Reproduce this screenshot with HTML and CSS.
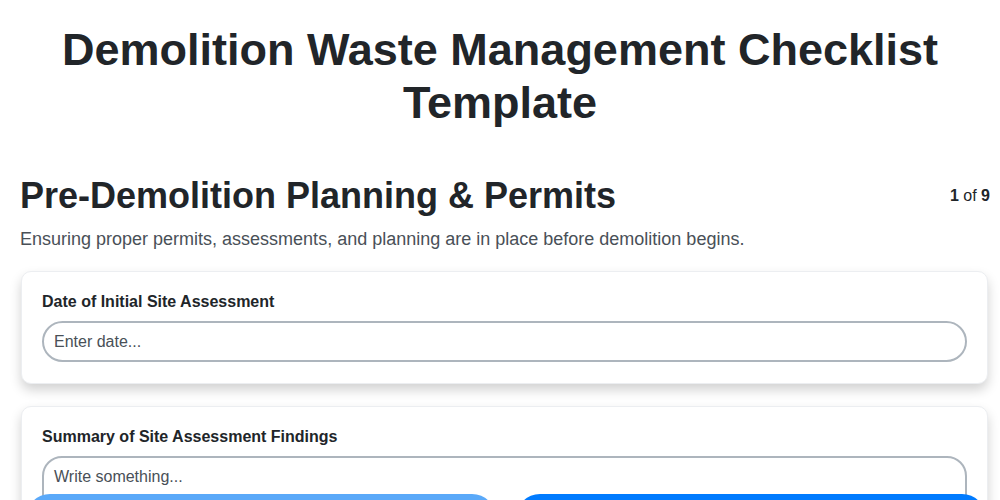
FILE: index.html
```html
<!DOCTYPE html>
<html lang="en">
<head>
<meta charset="utf-8">
<title>Demolition Waste Management Checklist Template</title>
<link rel="stylesheet" href="styles.css">
</head>
<body>
<main class="page">
  <h1 class="title">Demolition Waste Management Checklist Template</h1>
  <section class="section">
    <div class="section-head">
      <h2 class="section-title">Pre-Demolition Planning &amp; Permits</h2>
      <div class="progress"><b>1</b> of <b>9</b></div>
    </div>
    <p class="section-desc">Ensuring proper permits, assessments, and planning are in place before demolition begins.</p>
    <div class="card">
      <label class="field-label" for="d1">Date of Initial Site Assessment</label>
      <input class="field-input" id="d1" type="text" placeholder="Enter date...">
    </div>
    <div class="card">
      <label class="field-label" for="t1">Summary of Site Assessment Findings</label>
      <textarea class="field-textarea" id="t1" placeholder="Write something..."></textarea>
    </div>
  </section>
</main>
<nav class="nav">
  <button class="btn btn-prev" type="button">Previous</button>
  <button class="btn btn-next" type="button">Next</button>
</nav>
</body>
</html>
```
FILE: styles.css
```css
* { box-sizing: border-box; }
html, body { margin: 0; padding: 0; background: #fff; }
body {
  font-family: "Liberation Sans", Arial, sans-serif;
  color: #212529;
  font-size: 16px;
}
.page { padding: 0 10px 0 20px; }
.title {
  margin: 23px 30px 0 20px;
  text-align: center;
  font-size: 45px;
  line-height: 53px;
  font-weight: 700;
}
.section { margin-top: 45px; }
.section-head {
  display: flex;
  justify-content: space-between;
  align-items: center;
}
.section-title {
  margin: 0;
  font-size: 36px;
  line-height: 44px;
  font-weight: 700;
}
.progress { font-size: 16px; }
.section-desc {
  margin: 9px 0 20px;
  font-size: 18px;
  line-height: 24px;
  color: #495057;
}
.card {
  background: #fff;
  border: 1px solid #eceef1;
  border-radius: 10px;
  padding: 20px 20px 21px;
  margin: 0 2px 22px 1px;
  box-shadow: 0 6px 12px rgba(0,0,0,0.18);
}
.field-label {
  display: block;
  font-weight: 700;
  font-size: 16px;
  line-height: 19px;
  margin-bottom: 10px;
}
.field-input, .field-textarea {
  display: block;
  width: 100%;
  font-family: inherit;
  font-size: 16px;
  color: #212529;
  border: 2px solid #adb5bd;
  background: #fff;
  padding: 0 10px;
}
.field-input { height: 41px; border-radius: 21px; }
.field-textarea { height: 100px; border-radius: 20px; padding: 10px; resize: none; }
.field-input::placeholder, .field-textarea::placeholder { color: #495057; opacity: 1; }
.nav {
  position: fixed;
  left: 0; right: 0; bottom: -56px;
  display: flex;
  gap: 20px;
  padding: 0 14px 0 26px;
}
.btn {
  flex: 1;
  height: 62px;
  padding-top: 30px;
  border: none;
  border-radius: 24px;
  color: #fff;
  font-family: inherit;
  font-size: 16px;
}
.btn-prev { background: #5aa9f9; }
.btn-next { background: #007bff; }
```
